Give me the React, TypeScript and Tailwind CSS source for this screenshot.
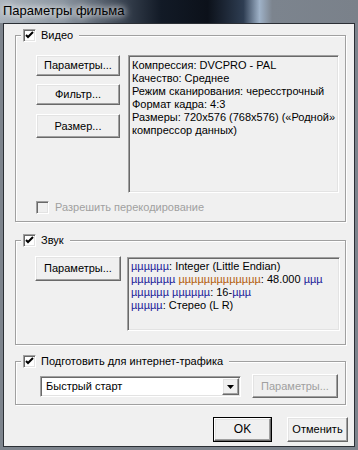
import React from "react";

const font = { fontFamily: '"Liberation Sans", Arial, sans-serif' };

function Check({ checked = true, disabled = false }: { checked?: boolean; disabled?: boolean }) {
  return (
    <div
      className={`w-[13px] h-[13px] shrink-0 border border-t-[#a0a0a0] border-l-[#a0a0a0] border-r-white border-b-white shadow-[inset_1px_1px_0_#696969,inset_-1px_-1px_0_#e3e3e3] flex items-center justify-center ${disabled ? "bg-[#f0f0f0]" : "bg-white"}`}
    >
      {checked && (
        <svg width="9" height="9" viewBox="0 0 9 9">
          <path d="M1 4 L3 6 L8 1" stroke="#000" strokeWidth="2" fill="none" />
        </svg>
      )}
    </div>
  );
}

function Btn({
  children,
  w,
  h,
  disabled = false,
  def = false,
}: {
  children: React.ReactNode;
  w: string;
  h: string;
  disabled?: boolean;
  def?: boolean;
}) {
  return (
    <div className={`${w} ${h} shrink-0 ${def ? "border border-black" : ""}`}>
      <div className="w-full h-full border border-t-white border-l-white border-r-[#696969] border-b-[#696969] shadow-[inset_-1px_-1px_0_#a0a0a0,inset_1px_1px_0_#e3e3e3] bg-[#f0f0f0] flex items-center justify-center">
        <span className={`text-[11px] leading-[13px] ${disabled ? "text-[#a0a0a0]" : "text-black"}`}>{children}</span>
      </div>
    </div>
  );
}

function Sunken({ className, children }: { className: string; children: React.ReactNode }) {
  return (
    <div
      className={`${className} shrink-0 border border-t-[#a0a0a0] border-l-[#a0a0a0] border-r-white border-b-white shadow-[inset_1px_1px_0_#696969,inset_-1px_-1px_0_#e3e3e3] bg-[#f0f0f0]`}
    >
      {children}
    </div>
  );
}

function Group({
  label,
  h,
  mt,
  children,
}: {
  label: string;
  h: string;
  mt: string;
  children: React.ReactNode;
}) {
  return (
    <div
      className={`relative w-[331px] ${h} ${mt} border border-[#a0a0a0] shadow-[inset_1px_1px_0_#fff,1px_1px_0_#fff]`}
    >
      <div className="absolute top-[-7px] left-[5px] flex items-center gap-[5px] bg-[#f0f0f0] pl-[2px] pr-[6px] h-[13px]">
        <Check />
        <span className="text-[11px] leading-[13px] text-black whitespace-nowrap">{label}</span>
      </div>
      {children}
    </div>
  );
}

const Mu = ({ children }: { children: React.ReactNode }) => (
  <span className="text-[#22229a]">{children}</span>
);

export default function App() {
  return (
    <div style={font} className="w-[358px] h-[450px] bg-[#7d848d] flex flex-col overflow-hidden">
      <div className="h-[23px] shrink-0 bg-[linear-gradient(to_right,#aab3bc_0%,#8a949f_18%,#3a4452_34%,#121a26_45%,#0c111a_58%,#2e3d52_68%,#9fb2c8_72.5%,#7c848e_76%,#7a818a_100%)] flex items-start pl-[3px] pt-[3px]">
        <span className="text-[13px] leading-[16px] text-black [text-shadow:0_0_6px_#fff,0_0_10px_#fff]">
          Параметры фильма
        </span>
      </div>
      <div className="ml-[3px] w-[352px] h-[424px] border border-[#2b2f35] bg-[#f0f0f0] pl-[11px] pt-[11px] flex flex-col">
        <Group label="Видео" h="h-[187px]" mt="mt-0">
          <div className="flex pl-[20px] pt-[19px]">
            <div className="flex flex-col w-[84px]">
              <Btn w="w-[84px]" h="h-[21px]">Параметры...</Btn>
              <div className="mt-[8px]">
                <Btn w="w-[84px]" h="h-[21px]">Фильтр...</Btn>
              </div>
              <div className="mt-[9px]">
                <Btn w="w-[84px]" h="h-[24px]">Размер...</Btn>
              </div>
            </div>
            <Sunken className="ml-[8px] w-[211px] h-[138px] pl-[3px] pt-[3px]">
              <div className="text-[11px] leading-[13px] text-black">
                <div>Компрессия: DVCPRO - PAL</div>
                <div>Качество: Среднее</div>
                <div>Режим сканирования: чересстрочный</div>
                <div>Формат кадра: 4:3</div>
                <div>Размеры: 720x576 (768x576) («Родной»</div>
                <div>компрессор данных)</div>
              </div>
            </Sunken>
          </div>
          <div className="flex items-center gap-[6px] pl-[20px] mt-[8px]">
            <Check checked={false} disabled />
            <span className="text-[11px] leading-[13px] text-[#a0a0a0]">Разрешить перекодирование</span>
          </div>
        </Group>

        <Group label="Звук" h="h-[105px]" mt="mt-[18px]">
          <div className="flex items-start pl-[19px] pt-[15px]">
            <Btn w="w-[86px]" h="h-[25px]">Параметры...</Btn>
            <Sunken className="ml-[6px] mt-[1px] w-[213px] h-[74px] pl-[3px] pt-[2px]">
              <div className="text-[11px] leading-[13px] text-black whitespace-nowrap">
                <div>
                  <Mu>µµµµµµ</Mu>: Integer (Little Endian)
                </div>
                <div>
                  <Mu>µµµµµµµ</Mu> <span className="text-[#b4600e]">µµµµµµµµµµµµµ</span>: 48.000 <Mu>µµµ</Mu>
                </div>
                <div>
                  <Mu>µµµµµµ µµµµµµ</Mu>: 16-<Mu>µµµ</Mu>
                </div>
                <div>
                  <Mu>µµµµµ</Mu>: Стерео (L R)
                </div>
              </div>
            </Sunken>
          </div>
        </Group>

        <Group label="Подготовить для интернет-трафика" h="h-[44px]" mt="mt-[16px]">
          <div className="flex items-start pl-[24px] pt-[12px]">
            <Sunken className="mt-[2px] w-[201px] h-[21px] flex items-center !bg-white">
              <span className="flex-1 pl-[5px] text-[11px] leading-[13px] text-black">Быстрый старт</span>
              <div className="w-[17px] h-[17px] mr-[1px] border border-t-white border-l-white border-r-[#696969] border-b-[#696969] shadow-[inset_-1px_-1px_0_#a0a0a0,inset_1px_1px_0_#e3e3e3] bg-[#f0f0f0] flex items-center justify-center">
                <svg width="7" height="4" viewBox="0 0 7 4">
                  <path d="M0 0 H7 L3.5 4 Z" fill="#000" />
                </svg>
              </div>
            </Sunken>
            <div className="ml-[11px]">
              <Btn w="w-[86px]" h="h-[24px]" disabled>
                Параметры...
              </Btn>
            </div>
          </div>
        </Group>

        <div className="flex justify-end pr-[6px] mt-[12px] gap-[15px]">
          <Btn w="w-[59px]" h="h-[25px]" def>
            <span className="text-[12px]">OK</span>
          </Btn>
          <Btn w="w-[61px]" h="h-[25px]">
            <span className="text-[11px]">Отменить</span>
          </Btn>
        </div>
      </div>
    </div>
  );
}
